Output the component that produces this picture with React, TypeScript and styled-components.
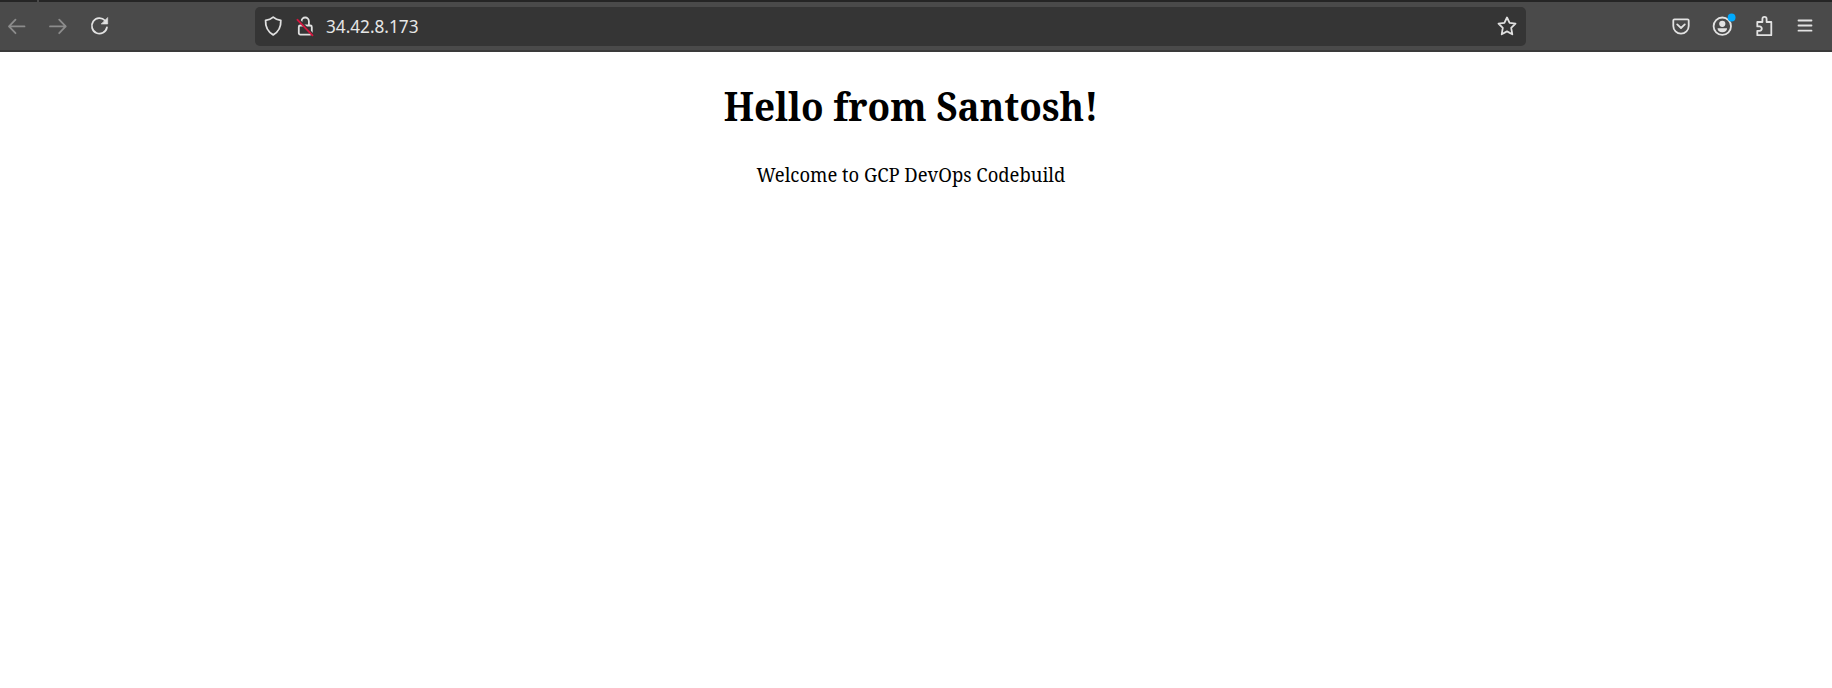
import React from "react";
import styled, { createGlobalStyle } from "styled-components";

const Global = createGlobalStyle`
  body { margin: 0; background: #fff; }
  * { box-sizing: border-box; }
`;
const Toolbar = styled.header`
  height: 52px; display: flex; align-items: center;
  background: #4a4a4a;
  border-top: 2px solid #252525; border-bottom: 2px solid #3a3a3a;
  color: #e0e0e0; position: relative;
`;
const TabEdge = styled.span`
  position: absolute; top: -2px; left: 37px; width: 2px; height: 2px; background: #4a4a4a;
`;
const Nav = styled.nav`display: flex; width: 255px; padding-left: 5px; gap: 17px;`;
const IconButton = styled.button<{ $dim?: boolean }>`
  display: flex; width: 24px; height: 24px; padding: 0; border: 0; background: none;
  color: ${(p) => (p.$dim ? "#8c8c8c" : "#e2e2e2")};
`;
const Glyph = styled.svg`
  width: 24px; height: 24px; display: block; overflow: visible; flex: none;
  fill: none; stroke: currentColor; stroke-width: 1.8; stroke-linecap: round; stroke-linejoin: round;
`;
const AddressBar = styled.div`
  width: 1271px; height: 39px; border-radius: 5px; background: #353535;
  display: flex; align-items: center; padding: 0 7px 0 6px; gap: 8px;
`;
const Address = styled.span`
  flex: 1; padding: 2px 0 0 1px; font: 17.2px/24px "Noto Sans", sans-serif; color: #e6e6e6;
`;
const Actions = styled.div`display: flex; margin-left: auto; margin-right: 15px; gap: 17.5px;`;
const Page = styled.main`text-align: center; width: 1822px;`;
const Title = styled.h1`
  margin: 26px 0 0; font: bold 39px/56px "Noto Serif", serif; color: #000;
  transform: scaleX(0.946);
`;
const Message = styled.p`
  margin: 28px 0 0; font: 20px/26px "Noto Serif", serif; color: #000;
  transform: scaleX(0.921);
`;

export default function App() {
  return (
    <>
      <Global />
      <Toolbar>
        <TabEdge />
        <Nav>
          <IconButton $dim><Glyph><path d="M19.500 12.400H4M10.500 5.600 4 12.400l6.500 6.800" /></Glyph></IconButton>
          <IconButton $dim><Glyph><path d="M4 12.400h15.700M13.200 5.600l6.500 6.800-6.500 6.800" /></Glyph></IconButton>
          <IconButton><Glyph><path d="M19.900 13.500A7.600 7.800 0 1 1 18 6.500" /><path d="M20.700 3.800v6.200h-6.200z" fill="currentColor" strokeWidth=".6" /></Glyph></IconButton>
        </Nav>
        <AddressBar>
          <Glyph><path d="M12.200 3.100c2 1.800 4.500 2.800 7.600 3.300.3 6-1.600 11-7.600 14.500C6.200 17.400 4.300 12.400 4.600 6.400 7.700 5.900 10.200 4.900 12.200 3.100z" /></Glyph>
          <Glyph>
            <path d="M8.500 7.500a3.700 4 0 0 1 7.400 0V11M7.300 11.500h10a1.500 1.500 0 0 1 1.500 1.500v6.100a1.500 1.500 0 0 1-1.500 1.500h-10a1.500 1.500 0 0 1-1.500-1.500V13a1.500 1.500 0 0 1 1.500-1.500z" />
            <path d="M5.500 5.500l15 15.500" stroke="#353535" strokeWidth="2" />
            <path d="M4.500 5.800l15 15.500" stroke="#d4173f" strokeWidth="1.900" />
          </Glyph>
          <Address>34.42.8.173</Address>
          <Glyph><path d="m12 3.500 2.600 5.400 5.900.8-4.300 4.100 1.100 6.500-5.300-2.900-5.300 2.900 1.100-6.500-4.300-4.100 5.900-.8z" /></Glyph>
        </AddressBar>
        <Actions>
          <IconButton><Glyph><path d="M5.500 5.300h13a1.200 1.200 0 0 1 1.200 1.200V12a7.700 7.700 0 0 1-15.400 0V6.500a1.200 1.200 0 0 1 1.200-1.200zM8.200 10.400l3.800 3.600 3.800-3.600" /></Glyph></IconButton>
          <IconButton><Glyph><circle cx="12.300" cy="12.200" r="8.700" /><circle cx="12.300" cy="9.800" r="3.100" fill="currentColor" stroke="none" /><path d="M7.500 14.300h9.600c0 2.800-2.200 4-4.800 4s-4.800-1.200-4.800-4z" fill="currentColor" stroke="none" /><circle cx="21.600" cy="3.500" r="3.900" fill="#00aaff" stroke="none" /></Glyph></IconButton>
          <IconButton><Glyph><path d="M5.300 21.200v-4.400h2.300a2.200 2.200 0 0 0 0-4.400H5.300V8H10.400V5a2.100 2.100 0 0 1 4.200 0v3h4.700v13.200z" /></Glyph></IconButton>
          <IconButton><Glyph><path d="M5.500 6.500h13M5.500 11.500h13M5.500 16.700h13" /></Glyph></IconButton>
        </Actions>
      </Toolbar>
      <Page>
        <Title>Hello from Santosh!</Title>
        <Message>Welcome to GCP DevOps Codebuild</Message>
      </Page>
    </>
  );
}
